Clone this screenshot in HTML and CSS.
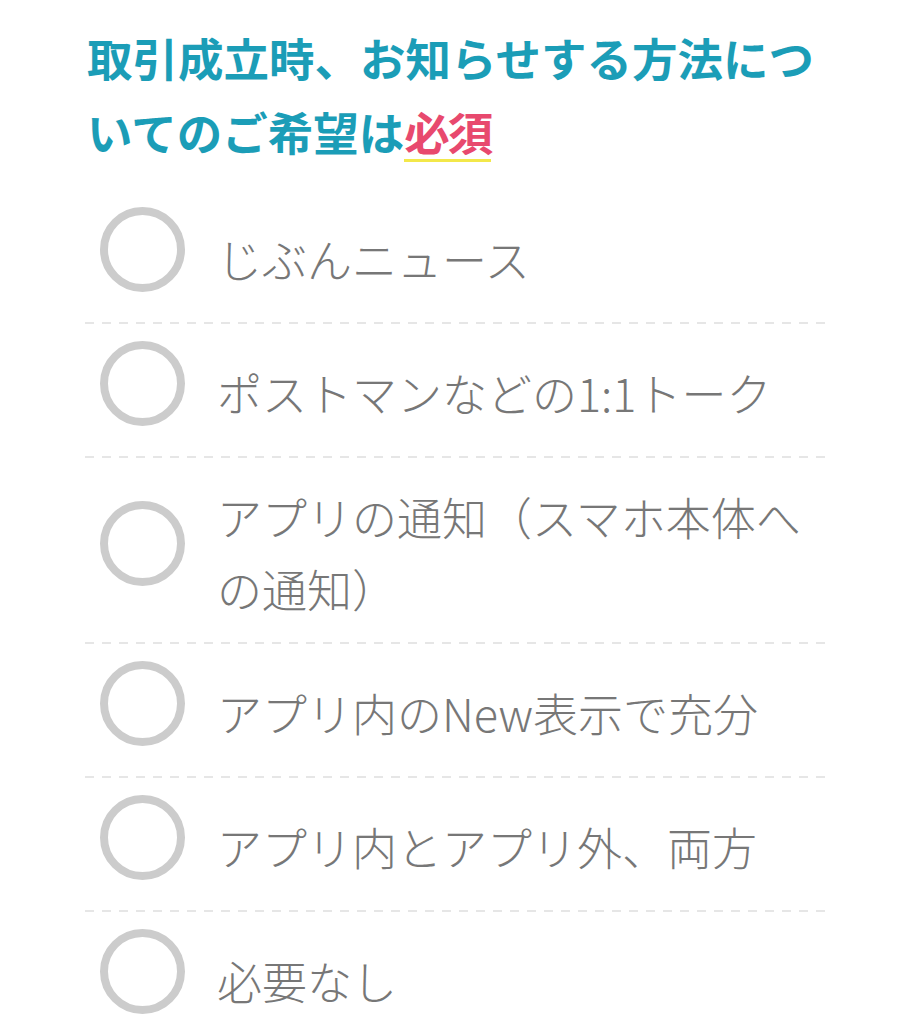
FILE: index.html
```html
<!DOCTYPE html>
<html lang="ja">
<head>
<meta charset="utf-8">
<title>取引成立時のお知らせ方法</title>
<link rel="stylesheet" href="styles.css">
</head>
<body>
<section class="question">
  <h2 class="q-title">取引成立時、お知らせする方法についてのご希望は<span class="required">必須</span></h2>
  <ul class="options">
    <li class="option"><span class="radio"></span><span class="label">じぶんニュース</span></li>
    <li class="option"><span class="radio"></span><span class="label">ポストマンなどの1:1トーク</span></li>
    <li class="option"><span class="radio"></span><span class="label">アプリの通知（スマホ本体への通知）</span></li>
    <li class="option"><span class="radio"></span><span class="label">アプリ内のNew表示で充分</span></li>
    <li class="option"><span class="radio"></span><span class="label">アプリ内とアプリ外、両方</span></li>
    <li class="option"><span class="radio"></span><span class="label">必要なし</span></li>
  </ul>
</section>
</body>
</html>
```
FILE: styles.css
```css
html, body {
  margin: 0;
  padding: 0;
  background: #ffffff;
}
body {
  font-family: "Noto Sans CJK JP", "Noto Sans", sans-serif;
}
.question {
  width: 743px;
  padding: 20px 0 0 85px;
}
.q-title {
  margin: 0 0 22px 2px;
  font-size: 45.5px;
  line-height: 74px;
  font-weight: 700;
  color: #1b9db7;
}
.required {
  color: #e8496e;
  letter-spacing: -2px;
  background: linear-gradient(#f3e84a, #f3e84a) left 61px / 100% 3px no-repeat;
}
.options {
  list-style: none;
  margin: 0;
  padding: 0;
}
.option {
  display: flex;
  align-items: center;
  padding: 17px 0 19px;
  background: repeating-linear-gradient(90deg, #e6e6e6 0 9px, transparent 9px 17px) left bottom / 100% 2px no-repeat;
}
.option:last-child {
  background: none;
}
.radio {
  flex-shrink: 0;
  width: 85px;
  height: 85px;
  box-sizing: border-box;
  border: 8px solid #cccccc;
  border-radius: 50%;
  margin: 0 32px 13px 15px;
}
.label {
  font-size: 45px;
  line-height: 72px;
  padding-top: 6px;
  color: #777777;
  font-weight: 300;
}
```
